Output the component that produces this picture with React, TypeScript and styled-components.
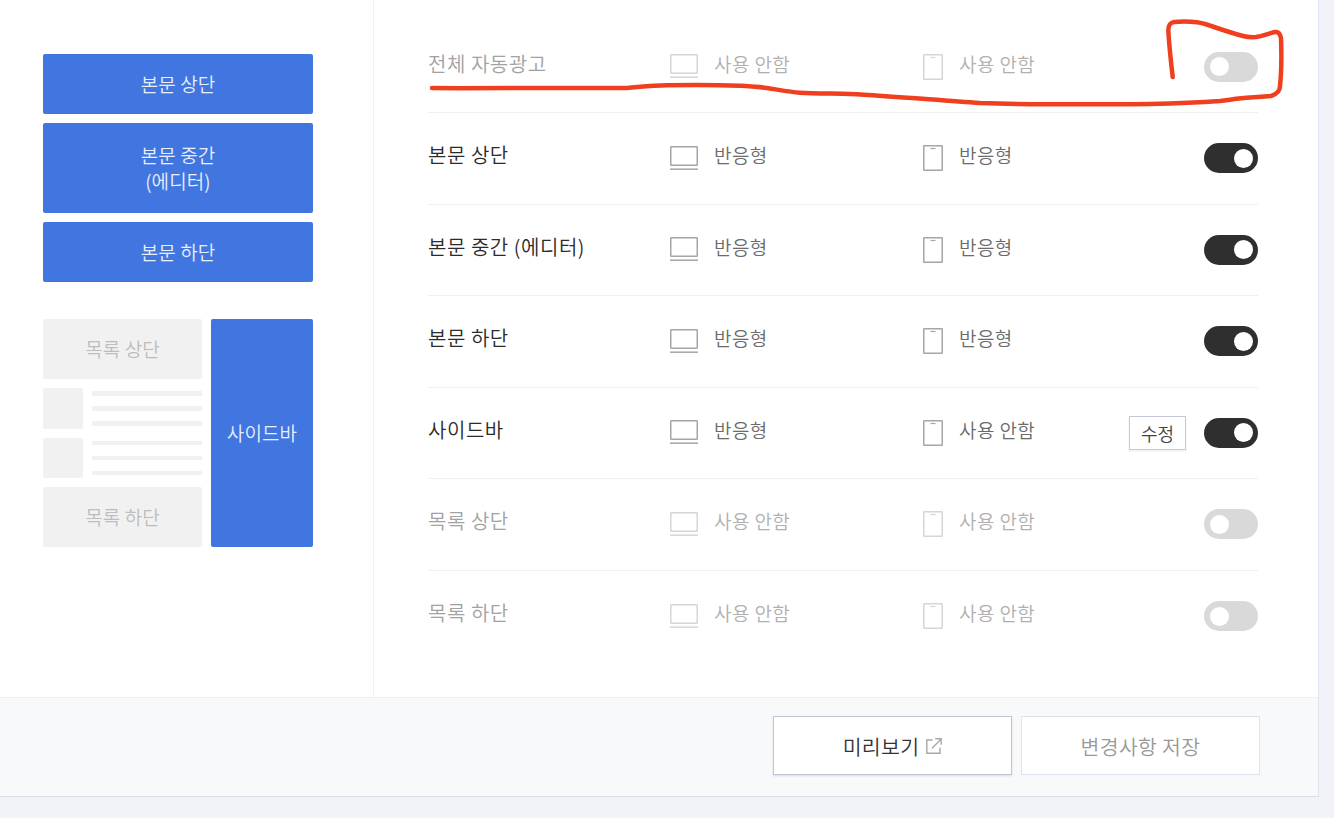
import React from 'react';
import styled, { createGlobalStyle } from 'styled-components';

const GlobalStyle = createGlobalStyle`
  html, body {
    margin: 0;
    padding: 0;
    height: 818px;
    overflow: hidden;
    background: #f1f3f8;
    font-family: "Noto Sans CJK KR", "Noto Sans", sans-serif;
    font-weight: 350;
  }
`

const Page = styled.div`
  position: relative;
  width: 1334px;
  height: 818px;
`

const Card = styled.div`
  width: 1319px;
  height: 797px;
  box-sizing: border-box;
  background: #fff;
  border-right: 1px solid #e0e3ee;
  border-bottom: 1px solid #dcdfea;
  display: flex;
  flex-direction: column;
`

const Body = styled.div`
  display: flex;
  height: 697px;
`

const Side = styled.div`
  width: 374px;
  box-sizing: border-box;
  border-right: 1px solid #eeeff4;
  padding: 54px 0 0 43px;
`

const Slots = styled.div`
  width: 270px;
  display: flex;
  flex-direction: column;
  gap: 9px;
`

const Slot = styled.div<{ $h: number; $off?: boolean }>`
  height: ${(p) => p.$h}px;
  border-radius: 2px;
  background: ${(p) => (p.$off ? '#f1f1f1' : '#4176e0')};
  color: ${(p) => (p.$off ? '#bdbdbd' : '#e8eefc')};
  font-size: 19px;
  line-height: 26px;
  letter-spacing: 0.1px;
  text-align: center;
  display: flex;
  align-items: center;
  justify-content: center;
`

const Lower = styled.div`
  margin-top: 37px;
  display: flex;
  gap: 9px;
  height: 228px;
`

const ListCol = styled.div`
  width: 159px;
  display: flex;
  flex-direction: column;
  gap: 9px;
`

const Post = styled.div`
  flex: 1;
  display: flex;
  gap: 9px;
`

const Thumb = styled.div`
  width: 40px;
  border-radius: 2px;
  background: #f1f1f1;
`

const Lines = styled.div`
  flex: 1;
  padding-top: 3px;
  display: flex;
  flex-direction: column;
  gap: 10.5px;
`

const Line = styled.div`
  height: 4.5px;
  background: #f1f1f1;
`

const SideSlot = styled(Slot)`
  width: 102px;
`

const Main = styled.div`
  flex: 1;
  padding: 21.5px 60px 0 54px;
`

const Row = styled.div<{ $last?: boolean }>`
  height: 91.5px;
  box-sizing: border-box;
  display: flex;
  align-items: center;
  border-bottom: ${(p) => (p.$last ? 'none' : '1px solid #eeeff4')};
`

const Name = styled.div<{ $off?: boolean }>`
  width: 242px;
  font-size: 20px;
  letter-spacing: 0.55px;
  margin-top: -7px;
  color: ${(p) => (p.$off ? '#a2a2a2' : '#2b2b2b')};
`

const Device = styled.div<{ $w: number }>`
  width: ${(p) => p.$w}px;
  display: flex;
  align-items: center;
`

const IconBox = styled.div<{ $off: boolean; $w: number }>`
  width: ${(p) => p.$w}px;
  display: flex;
  opacity: ${(p) => (p.$off ? 0.45 : 1)};
`

const State = styled.span<{ $off: boolean }>`
  font-size: 19px;
  letter-spacing: 0.4px;
  margin-top: -7px;
  color: ${(p) => (p.$off ? '#b0b0b0' : '#6b6b6b')};
`

const Right = styled.div`
  flex: 1;
  display: flex;
  align-items: center;
  justify-content: flex-end;
  gap: 18px;
`

const EditButton = styled.button`
  width: 57px;
  height: 34px;
  padding: 0;
  box-sizing: border-box;
  background: #fff;
  border: 1px solid #c5c9dc;
  box-shadow: 0 1px 2px rgba(0, 0, 0, 0.08);
  font: inherit;
  font-size: 18px;
  color: #444;
`

const Toggle = styled.div<{ $on: boolean }>`
  width: 54px;
  height: 30px;
  border-radius: 15px;
  background: ${(p) => (p.$on ? '#2f2f2f' : '#d9d9d9')};
  display: flex;
  align-items: center;
  justify-content: ${(p) => (p.$on ? 'flex-end' : 'flex-start')};
  padding: 0 5.5px;
  box-sizing: border-box;
`

const Knob = styled.div`
  width: 19px;
  height: 19px;
  border-radius: 50%;
  background: #fff;
`

const Footer = styled.div`
  flex: 1;
  background: #f8f9fb;
  border-top: 1px solid #eeeff4;
  display: flex;
  justify-content: flex-end;
  gap: 9px;
  padding: 18px 58px 0 0;
`

const FootButton = styled.button<{ $primary?: boolean }>`
  width: 239px;
  height: 59px;
  box-sizing: border-box;
  background: #fff;
  border: 1px solid ${(p) => (p.$primary ? '#bfc4d6' : '#e0e3ee')};
  box-shadow: ${(p) => (p.$primary ? '0 1px 2px rgba(0, 0, 0, 0.12)' : 'none')};
  font: inherit;
  font-size: 20.5px;
  letter-spacing: 0.3px;
  color: ${(p) => (p.$primary ? '#333' : '#999')};
  display: flex;
  align-items: center;
  justify-content: center;
  gap: 7px;
`

const Scribble = styled.svg`
  position: absolute;
  left: 0;
  top: 0;
  pointer-events: none;
`

const Laptop = () => (
  <svg width="28" height="25" viewBox="0 0 28 25" fill="none" stroke="#a6a6a6" strokeWidth="1.5">
    <rect x="0.75" y="0.75" width="26.5" height="18.5" rx="0.5" />
    <path d="M0 23.2h28" />
  </svg>
)

const Tablet = () => (
  <svg width="20" height="26" viewBox="0 0 20 26" fill="none" stroke="#a6a6a6" strokeWidth="1.5">
    <rect x="0.75" y="0.75" width="18.5" height="24.5" rx="0.5" />
    <path d="M7.5 3.5h5" strokeWidth="1.2" />
  </svg>
)

const External = () => (
  <svg width="16" height="16" viewBox="0 0 16 16" fill="none" stroke="#a8a8a8" strokeWidth="1.4">
    <path d="M6.5 2H.8v13.2H14V9.5" />
    <path d="M6 10.2 15 1.2M9.2 .8h6v6" />
  </svg>
)

const rows = [
  { name: '전체 자동광고', pc: '사용 안함', mobile: '사용 안함', on: false },
  { name: '본문 상단', pc: '반응형', mobile: '반응형', on: true },
  { name: '본문 중간 (에디터)', pc: '반응형', mobile: '반응형', on: true },
  { name: '본문 하단', pc: '반응형', mobile: '반응형', on: true },
  { name: '사이드바', pc: '반응형', mobile: '사용 안함', on: true, edit: true },
  { name: '목록 상단', pc: '사용 안함', mobile: '사용 안함', on: false },
  { name: '목록 하단', pc: '사용 안함', mobile: '사용 안함', on: false },
];

const App = () => {
  return (
    <Page>
      <GlobalStyle />
      <Card>
        <Body>
          <Side>
            <Slots>
              <Slot $h={60}>본문 상단</Slot>
              <Slot $h={90}>본문 중간<br />(에디터)</Slot>
              <Slot $h={60}>본문 하단</Slot>
            </Slots>
            <Lower>
              <ListCol>
                <Slot $h={60} $off>목록 상단</Slot>
                {[0, 1].map((i) => (
                  <Post key={i}>
                    <Thumb />
                    <Lines>
                      <Line />
                      <Line />
                      <Line />
                    </Lines>
                  </Post>
                ))}
                <Slot $h={60} $off>목록 하단</Slot>
              </ListCol>
              <SideSlot $h={228}>사이드바</SideSlot>
            </Lower>
          </Side>
          <Main>
            {rows.map((r, i) => (
              <Row key={r.name} $last={i === rows.length - 1}>
                <Name $off={!r.on}>{r.name}</Name>
                <Device $w={253}>
                  <IconBox $off={!r.on} $w={44}><Laptop /></IconBox>
                  <State $off={!r.on}>{r.pc}</State>
                </Device>
                <Device $w={200}>
                  <IconBox $off={!r.on} $w={36}><Tablet /></IconBox>
                  <State $off={!r.on}>{r.mobile}</State>
                </Device>
                <Right>
                  {r.edit && <EditButton>수정</EditButton>}
                  <Toggle $on={r.on}><Knob /></Toggle>
                </Right>
              </Row>
            ))}
          </Main>
        </Body>
        <Footer>
          <FootButton $primary>미리보기 <External /></FootButton>
          <FootButton>변경사항 저장</FootButton>
        </Footer>
      </Card>
      <Scribble width="1334" height="818" viewBox="0 0 1334 818" fill="none">
        <path
          d="M432 88C500 88.5 570 88.5 627 88C640 87 652 85.5 667 85.3C690 84.8 720 85 740 85.7C752 86.5 760 87 767 88C780 90 790 92 800 92.7C815 93.5 835 93.5 850 94C890 96 935 100 980 103C1040 105 1100 104.5 1150 104C1175 103.5 1200 102.5 1220 101C1232 99.5 1240 98 1250 97.5C1258 97 1265 96.5 1271 96C1277 94 1280 91 1280 86C1281.5 72 1281.5 52 1281 38C1280 33 1278 31.5 1275 32C1268 33.5 1263 36 1256 37C1250 37.5 1247 37 1243 36C1235 34 1226 31 1217 28C1210 25.5 1203 23 1197 22.3C1190 21.5 1180 21.5 1174 22C1170 22.8 1168.5 25 1168.3 30C1169 45 1171 62 1172.7 77"
          stroke="#ef3f1f"
          strokeWidth="4.5"
          strokeLinecap="round"
          strokeLinejoin="round"
        />
      </Scribble>
    </Page>
  );
}

export default App;
